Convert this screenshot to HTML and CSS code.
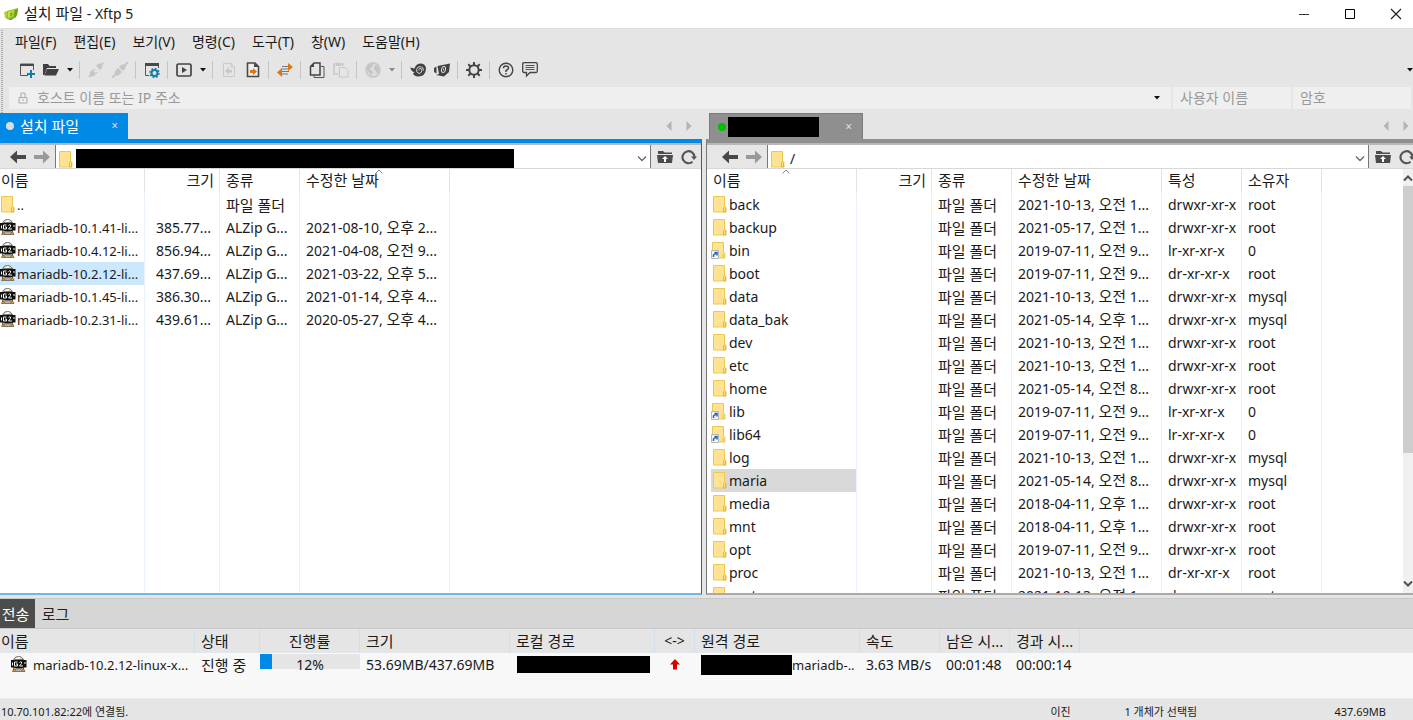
FILE: index.html
```html
<!DOCTYPE html>
<html lang="ko">
<head>
<meta charset="utf-8">
<title>설치 파일 - Xftp 5</title>
<link rel="stylesheet" href="styles.css">
</head>
<body>
<svg class="defs" aria-hidden="true">
  <symbol id="folder" viewBox="0 0 16 18">
    <path d="M1.500 1.500H12.500V11L14 12.500V17H1.500Z" fill="#ffe393" stroke="#ecc850"/>
    <path d="M11.500 17V12.500L12.500 11.500L13.500 12.500V17Z" fill="#fce07f" stroke="#e5b935"/>
  </symbol>
  <symbol id="shortcut" viewBox="0 0 16 18">
    <path d="M1.500 1.500H12.500V11L14 12.500V17H1.500Z" fill="#ffe393" stroke="#ecc850"/>
    <path d="M12 17V12.500" stroke="#e5b935"/>
    <path d="M.5 9.500H7.500V17.500H.5Z" fill="#f4f7fa" stroke="#b4b8bc"/>
    <path d="M2.500 16V14L5.500 12M3.500 11.500H6V14.500" fill="none" stroke="#2d63a8" stroke-width="1.500"/>
  </symbol>
  <symbol id="zip" viewBox="0 0 16 18">
    <path d="M2.500 6Q3 1.500 7.500 1.500Q12 1.500 12.500 6V15H2.500Z" fill="#d9d7c6" stroke="#777464"/>
    <path d="M5 5Q6 2.500 9 3" stroke="#fff" stroke-width="1.500" fill="none"/>
    <path d="M0 5H3L4 4.500H12L13 5H15.500V12.500H13L11 13.500H5L3 12.500H0Z" fill="#111"/>
    <path d="M6.500 7H3.500V11H6.500V9H5M8.500 7.500Q9 6.500 10.500 7Q11.500 8 8.500 11H12M1.500 7.500V10.500M14 7V9" fill="none" stroke="#f4f4ee"/>
    <path d="M1.500 16.500L3 13.500L5.500 16.500ZM10 16.500L12.500 13.500L14 16.500Z" fill="#e59a25" stroke="#59401a" stroke-width=".6"/>
    <path d="M5 16.500H10.500" stroke="#777"/>
  </symbol>
  <symbol id="back" viewBox="0 0 16 14"><path d="M0 7L7 0.500V5H16V9H7V13.500Z" fill="currentColor"/></symbol>
  <symbol id="forward" viewBox="0 0 16 14"><path d="M16 7L9 0.500V5H0V9H9V13.500Z" fill="currentColor"/></symbol>
  <symbol id="up" viewBox="0 0 16 14">
    <path d="M1 1H6L7.500 2.500H15V4H1ZM0 5H16L15 13H1Z" fill="#4b4b4b"/>
    <path d="M8 6L11 9H9V12H7V9H5Z" fill="#fff"/>
  </symbol>
  <symbol id="reload" viewBox="0 0 16 16">
    <path d="M11.500 12.700A6 6 0 1 1 13.500 8" fill="none" stroke="#555" stroke-width="2.200"/>
    <path d="M10 7.500H16L13 11Z" fill="#555"/>
  </symbol>
  <symbol id="chevron" viewBox="0 0 10 6"><path d="M1 .5L5 4.500L9 .5" fill="none" stroke="#666" stroke-width="1.300"/></symbol>
  <symbol id="sort" viewBox="0 0 8 5"><path d="M.5 4.500L4 1L7.500 4.500" fill="none" stroke="#888"/></symbol>
  <symbol id="drop" viewBox="0 0 6 4"><path d="M0 0H6L3 3.500Z" fill="currentColor"/></symbol>
  <symbol id="left" viewBox="0 0 6 10"><path d="M5.500 0V10L.5 5Z" fill="#b4b4b4"/></symbol>
  <symbol id="right" viewBox="0 0 6 10"><path d="M.5 0V10L5.500 5Z" fill="#b4b4b4"/></symbol>
</svg>

<header class="titlebar">
  <svg class="logo" viewBox="0 0 16 14">
    <path d="M0 5L4 4V12L1 11Z" fill="#b5cf3a"/>
    <path d="M3 4L14 1L13 8L9 11L3 12Z" fill="#8cc41c"/>
    <path d="M4 5L10 3L9 9L4 11Z" fill="#c9e04a"/>
    <path d="M6 6L9 5L8 9L6 9.500Z" fill="#7fae14"/>
    <path d="M11 3L14 2L13 8L10 10Z" fill="#6c9f12"/>
    <path d="M3 12L9 11L13 8L12 10L7 13Z" fill="#4b8610"/>
  </svg>
  <h1 class="caption"><span class="ko">설치 파일</span> - Xftp 5</h1>
  <div class="window-buttons">
    <button class="window-button" aria-label="최소화"><svg viewBox="0 0 12 12"><path d="M1 6.500H11" stroke="#333"/></svg></button>
    <button class="window-button" aria-label="최대화"><svg viewBox="0 0 12 12"><path d="M1.500 1.500H10.500V10.500H1.500Z" fill="none" stroke="#000"/></svg></button>
    <button class="window-button" aria-label="닫기"><svg viewBox="0 0 12 12"><path d="M1 1L11 11M11 1L1 11" stroke="#222" stroke-width="1.200"/></svg></button>
  </div>
</header>

<nav class="menubar">
  <button class="menu">파일(F)</button>
  <button class="menu">편집(E)</button>
  <button class="menu">보기(V)</button>
  <button class="menu">명령(C)</button>
  <button class="menu">도구(T)</button>
  <button class="menu">창(W)</button>
  <button class="menu">도움말(H)</button>
</nav>

<div class="toolbar">
  <button class="tool" aria-label="새로 만들기"><svg viewBox="0 0 16 16"><path d="M9 13.500H1.500V2H14.500V8" fill="none" stroke="#555"/><path d="M1 2H15V4H1Z" fill="#484848"/><path d="M12 8V16M8 12H16" stroke="#187aa8" stroke-width="2"/></svg></button>
  <button class="tool" aria-label="열기"><svg viewBox="0 0 16 16"><path d="M0 13V2H5L6.500 4H13V6H4L1.500 13Z" fill="#404040"/><path d="M4 7H16L13 13.500H1.500Z" fill="#404040"/></svg></button>
  <button class="more" aria-label="열기 목록"><svg viewBox="0 0 6 4"><use href="#drop"/></svg></button>
  <i class="sep"></i>
  <button class="tool" disabled aria-label="다시 연결"><svg viewBox="0 0 16 16"><path d="M1 15L3 13M15 1L13 3" stroke="#c6c6c6" stroke-width="2"/><path d="M2 10L4 8L8 12L6 14Q4 15 2.500 13.500Q1 12 2 10ZM8 4L10 2Q12 1 13.500 2.500Q15 4 14 6L12 8Z" fill="#c6c6c6"/><path d="M5 9L7 7M7.500 11.500L9 10" stroke="#c6c6c6" stroke-width="1.500"/></svg></button>
  <button class="tool" disabled aria-label="연결 끊기"><svg viewBox="0 0 16 16"><path d="M0 16L4 12M12 4L16 0" stroke="#c6c6c6" stroke-width="2"/><path d="M3 9L6 6L10 10L7 13Q5 14 3 13Q2 11 3 9ZM7 5L9 3Q11 2 13 3Q14 5 13 7L11 9Z" fill="#c6c6c6"/></svg></button>
  <i class="sep"></i>
  <button class="tool" aria-label="속성"><svg viewBox="0 0 16 16"><path d="M5 13.500H1.500V2H14.500V6" fill="none" stroke="#555"/><path d="M1 1H15V4H1Z" fill="#484848"/><circle cx="10.500" cy="11" r="3" fill="none" stroke="#187aa8" stroke-width="2"/><circle cx="10.500" cy="11" r="4.500" fill="none" stroke="#187aa8" stroke-width="1.500" stroke-dasharray="1.700 1.800"/></svg></button>
  <i class="sep"></i>
  <button class="tool" aria-label="실행"><svg viewBox="0 0 16 16"><rect x="1" y="2" width="14" height="12" rx="1.500" fill="none" stroke="#444" stroke-width="1.700"/><path d="M6 5L11 8L6 11Z" fill="#444"/></svg></button>
  <button class="more" aria-label="실행 목록"><svg viewBox="0 0 6 4"><use href="#drop"/></svg></button>
  <i class="sep"></i>
  <button class="tool" disabled aria-label="받기"><svg viewBox="0 0 16 16"><path d="M2.500 1.500H10L13.500 5V14.500H2.500Z" fill="none" stroke="#c9c9c9"/><path d="M10 1V5H14" fill="none" stroke="#c9c9c9"/><path d="M4 9L8 5.500V8H11V10.500H8V12.500Z" fill="#c6c6c6"/></svg></button>
  <button class="tool" aria-label="보내기"><svg viewBox="0 0 16 16"><path d="M2.500 1H10L13.500 4.500V14.500H2.500Z" fill="#eee" stroke="#484848" stroke-width="1.600"/><path d="M9 1V5H14Z" fill="#484848"/><path d="M12 9.500L8 6V8H5V11H8V13Z" fill="#e07612"/></svg></button>
  <i class="sep"></i>
  <button class="tool" aria-label="동기화"><svg viewBox="0 0 16 16"><path d="M5 4.500H11M4 7H12M4 9.500H12M5 12H11" stroke="#777"/><path d="M11 1L16 5L11 9ZM5 6L0 10.500L5 15Z" fill="#e07612"/></svg></button>
  <i class="sep"></i>
  <button class="tool" aria-label="복사"><svg viewBox="0 0 16 16"><path d="M5 1H11V13H1.500V4.500Z" fill="none" stroke="#444" stroke-width="1.500"/><path d="M1 5L5 1V5Z" fill="#444"/><path d="M12 4.500H15V15.500H5V13" fill="none" stroke="#555"/></svg></button>
  <button class="tool" disabled aria-label="붙여넣기"><svg viewBox="0 0 16 16"><path d="M5 12H1V2H10V4" fill="none" stroke="#c9c9c9" stroke-width="1.600"/><path d="M3 1H8V4H3Z" fill="#c9c9c9"/><path d="M6.500 5.500H12L15 8.500V15H6.500Z" fill="#e6e6e6" stroke="#c6c6c6"/></svg></button>
  <i class="sep"></i>
  <button class="tool" disabled aria-label="인코딩"><svg viewBox="0 0 16 16"><circle cx="8" cy="8" r="7" fill="#ddd" stroke="#c4c4c4" stroke-width="1.300"/><path d="M2 4Q5 1 8 2L7 5L4.500 6L6 8L8 10L6 14L4 10L1.500 8ZM10 3L13 4L14.500 8L12 12L11 9L9 7Z" fill="#c4c4c4"/></svg></button>
  <button class="more" disabled aria-label="인코딩 목록"><svg viewBox="0 0 6 4"><use href="#drop"/></svg></button>
  <i class="sep"></i>
  <button class="tool" aria-label="Xshell"><svg viewBox="0 0 16 16"><path d="M0 5.500L4.500 6.500Q6 1.500 11 1.500Q16 2 16 7Q15.500 14.500 8 14.500Q4 14 3 11.500L4.500 10.500Q1 9 0 5.500Z" fill="#424242"/><path d="M13.500 8.500A3.500 3.500 0 1 0 9 11.500Q12 11 12 8Q11.500 6 9.700 6.500Q8.500 7 9 8.500" fill="none" stroke="#d4d4d4"/></svg></button>
  <button class="tool" aria-label="Xftp"><svg viewBox="0 0 16 16"><path d="M0 6L2.500 4.500V11.500L0 10ZM3.500 4L16 1.500L15 10L10 14.500L2 13L5 12Z" fill="#424242"/><ellipse cx="9.500" cy="7.500" rx="2" ry="3" fill="none" stroke="#ddd" transform="rotate(12 9.500 7.500)"/><path d="M9.500 6.500V8.500" stroke="#ddd"/></svg></button>
  <i class="sep"></i>
  <button class="tool" aria-label="옵션"><svg viewBox="0 0 16 16"><circle cx="8" cy="8" r="4.700" fill="none" stroke="#444" stroke-width="2"/><path d="M8 0V3M8 13V16M0 8H3M13 8H16M2.300 2.300L4.500 4.500M11.500 11.500L13.700 13.700M13.700 2.300L11.500 4.500M2.300 13.700L4.500 11.500" stroke="#444" stroke-width="2"/></svg></button>
  <i class="sep"></i>
  <button class="tool" aria-label="도움말"><svg viewBox="0 0 16 16"><circle cx="8" cy="8" r="6.800" fill="none" stroke="#444" stroke-width="1.400"/><path d="M5.500 6.200Q5.500 4 8 4Q10.500 4 10.500 6Q10.500 7.500 8 8.500V10M8 11V12.500" fill="none" stroke="#444" stroke-width="1.500"/></svg></button>
  <button class="tool" aria-label="의견"><svg viewBox="0 0 16 16"><path d="M2 .7H14Q15.300 .7 15.300 2V9Q15.300 10.500 14 10.500H8L4.500 14V10.500H2Q.7 10.500 .7 9V2Q.7 .7 2 .7Z" fill="none" stroke="#444" stroke-width="1.300"/><path d="M3.500 3.500H12.500M3.500 5.500H12.500M3.500 7.500H12.500" stroke="#555"/></svg></button>
  <button class="more overflow" aria-label="더 보기"><svg viewBox="0 0 6 4"><use href="#drop"/></svg></button>
</div>

<div class="connect">
  <label class="field host">
    <svg class="lock" viewBox="0 0 10 12"><path d="M1 5.500H9V11H1ZM3 5V1H7V5M5 7V9" fill="none" stroke="#aaa"/></svg>
    <input type="text" aria-label="호스트" placeholder="호스트 이름 또는 IP 주소">
    <button class="more" aria-label="호스트 목록"><svg viewBox="0 0 6 4"><use href="#drop"/></svg></button>
  </label>
  <input class="field login" type="text" aria-label="사용자 이름" placeholder="사용자 이름">
  <input class="field login" type="password" aria-label="암호" placeholder="암호">
</div>

<main class="panes">
  <section class="pane local">
    <div class="tabs">
      <button class="tab"><i class="dot"></i><span class="ko">설치 파일</span><span class="close">×</span></button>
      <div class="scrollers"><svg viewBox="0 0 6 10"><use href="#left"/></svg><svg viewBox="0 0 6 10"><use href="#right"/></svg></div>
    </div>
    <div class="frame">
      <div class="pathbar">
        <button class="nav" aria-label="뒤로"><svg viewBox="0 0 16 14"><use href="#back"/></svg></button>
        <button class="nav" disabled aria-label="앞으로"><svg viewBox="0 0 16 14"><use href="#forward"/></svg></button>
        <div class="path"><svg class="file-icon"><use href="#folder"/></svg><i class="mask mask-path"></i><svg class="chevron"><use href="#chevron"/></svg></div>
        <button class="nav" aria-label="상위 폴더"><svg viewBox="0 0 16 14"><use href="#up"/></svg></button>
        <button class="nav" aria-label="새로 고침"><svg viewBox="0 0 16 16"><use href="#reload"/></svg></button>
      </div>
      <div class="list">
        <table class="files">
          <colgroup><col class="w-name"><col class="w-size"><col class="w-kind"><col class="w-date"><col></colgroup>
          <thead><tr><th>이름</th><th class="num">크기</th><th>종류</th><th class="sorted">수정한 날짜<svg class="sort"><use href="#sort"/></svg></th><th></th></tr></thead>
          <tbody>
            <tr><td class="name"><svg class="file-icon"><use href="#folder"/></svg>..</td><td></td><td class="ko">파일 폴더</td><td></td><td></td></tr>
            <tr><td class="name"><svg class="file-icon"><use href="#zip"/></svg>mariadb-10.1.41-li...</td><td class="num">385.77...</td><td>ALZip G...</td><td>2021-08-10, <span class="ko">오후</span> 2...</td><td></td></tr>
            <tr><td class="name"><svg class="file-icon"><use href="#zip"/></svg>mariadb-10.4.12-li...</td><td class="num">856.94...</td><td>ALZip G...</td><td>2021-04-08, <span class="ko">오전</span> 9...</td><td></td></tr>
            <tr class="selected"><td class="name"><svg class="file-icon"><use href="#zip"/></svg>mariadb-10.2.12-li...</td><td class="num">437.69...</td><td>ALZip G...</td><td>2021-03-22, <span class="ko">오후</span> 5...</td><td></td></tr>
            <tr><td class="name"><svg class="file-icon"><use href="#zip"/></svg>mariadb-10.1.45-li...</td><td class="num">386.30...</td><td>ALZip G...</td><td>2021-01-14, <span class="ko">오후</span> 4...</td><td></td></tr>
            <tr><td class="name"><svg class="file-icon"><use href="#zip"/></svg>mariadb-10.2.31-li...</td><td class="num">439.61...</td><td>ALZip G...</td><td>2020-05-27, <span class="ko">오후</span> 4...</td><td></td></tr>
            <tr class="rest"><td></td><td></td><td></td><td></td><td></td></tr>
          </tbody>
        </table>
      </div>
    </div>
  </section>

  <section class="pane remote">
    <div class="tabs">
      <button class="tab" aria-label="원격"><i class="dot"></i><i class="mask mask-tab"></i><span class="close">×</span></button>
      <div class="scrollers"><svg viewBox="0 0 6 10"><use href="#left"/></svg><svg viewBox="0 0 6 10"><use href="#right"/></svg></div>
    </div>
    <div class="frame">
      <div class="pathbar">
        <button class="nav" aria-label="뒤로"><svg viewBox="0 0 16 14"><use href="#back"/></svg></button>
        <button class="nav" disabled aria-label="앞으로"><svg viewBox="0 0 16 14"><use href="#forward"/></svg></button>
        <div class="path"><svg class="file-icon"><use href="#folder"/></svg><span class="path-text">/</span><svg class="chevron"><use href="#chevron"/></svg></div>
        <button class="nav" aria-label="상위 폴더"><svg viewBox="0 0 16 14"><use href="#up"/></svg></button>
        <button class="nav" aria-label="새로 고침"><svg viewBox="0 0 16 16"><use href="#reload"/></svg></button>
      </div>
      <div class="list">
        <table class="files">
          <colgroup><col class="w-name"><col class="w-size"><col class="w-kind"><col class="w-date"><col class="w-kind"><col class="w-kind"><col></colgroup>
          <thead><tr><th class="sorted">이름<svg class="sort"><use href="#sort"/></svg></th><th class="num">크기</th><th>종류</th><th>수정한 날짜</th><th>특성</th><th>소유자</th><th></th></tr></thead>
          <tbody>
            <tr><td class="name"><svg class="file-icon"><use href="#folder"/></svg>back</td><td></td><td class="ko">파일 폴더</td><td>2021-10-13, <span class="ko">오전</span> 1...</td><td>drwxr-xr-x</td><td>root</td><td></td></tr>
            <tr><td class="name"><svg class="file-icon"><use href="#folder"/></svg>backup</td><td></td><td class="ko">파일 폴더</td><td>2021-05-17, <span class="ko">오전</span> 1...</td><td>drwxr-xr-x</td><td>root</td><td></td></tr>
            <tr><td class="name link"><svg class="file-icon"><use href="#shortcut"/></svg>bin</td><td></td><td class="ko">파일 폴더</td><td>2019-07-11, <span class="ko">오전</span> 9...</td><td>lr-xr-xr-x</td><td>0</td><td></td></tr>
            <tr><td class="name"><svg class="file-icon"><use href="#folder"/></svg>boot</td><td></td><td class="ko">파일 폴더</td><td>2019-07-11, <span class="ko">오전</span> 9...</td><td>dr-xr-xr-x</td><td>root</td><td></td></tr>
            <tr><td class="name"><svg class="file-icon"><use href="#folder"/></svg>data</td><td></td><td class="ko">파일 폴더</td><td>2021-10-13, <span class="ko">오전</span> 1...</td><td>drwxr-xr-x</td><td>mysql</td><td></td></tr>
            <tr><td class="name"><svg class="file-icon"><use href="#folder"/></svg>data_bak</td><td></td><td class="ko">파일 폴더</td><td>2021-05-14, <span class="ko">오후</span> 1...</td><td>drwxr-xr-x</td><td>mysql</td><td></td></tr>
            <tr><td class="name"><svg class="file-icon"><use href="#folder"/></svg>dev</td><td></td><td class="ko">파일 폴더</td><td>2021-10-13, <span class="ko">오전</span> 1...</td><td>drwxr-xr-x</td><td>root</td><td></td></tr>
            <tr><td class="name"><svg class="file-icon"><use href="#folder"/></svg>etc</td><td></td><td class="ko">파일 폴더</td><td>2021-10-13, <span class="ko">오전</span> 1...</td><td>drwxr-xr-x</td><td>root</td><td></td></tr>
            <tr><td class="name"><svg class="file-icon"><use href="#folder"/></svg>home</td><td></td><td class="ko">파일 폴더</td><td>2021-05-14, <span class="ko">오전</span> 8...</td><td>drwxr-xr-x</td><td>root</td><td></td></tr>
            <tr><td class="name link"><svg class="file-icon"><use href="#shortcut"/></svg>lib</td><td></td><td class="ko">파일 폴더</td><td>2019-07-11, <span class="ko">오전</span> 9...</td><td>lr-xr-xr-x</td><td>0</td><td></td></tr>
            <tr><td class="name link"><svg class="file-icon"><use href="#shortcut"/></svg>lib64</td><td></td><td class="ko">파일 폴더</td><td>2019-07-11, <span class="ko">오전</span> 9...</td><td>lr-xr-xr-x</td><td>0</td><td></td></tr>
            <tr><td class="name"><svg class="file-icon"><use href="#folder"/></svg>log</td><td></td><td class="ko">파일 폴더</td><td>2021-10-13, <span class="ko">오전</span> 1...</td><td>drwxr-xr-x</td><td>mysql</td><td></td></tr>
            <tr class="selected"><td class="name"><svg class="file-icon"><use href="#folder"/></svg>maria</td><td></td><td class="ko">파일 폴더</td><td>2021-05-14, <span class="ko">오전</span> 8...</td><td>drwxr-xr-x</td><td>mysql</td><td></td></tr>
            <tr><td class="name"><svg class="file-icon"><use href="#folder"/></svg>media</td><td></td><td class="ko">파일 폴더</td><td>2018-04-11, <span class="ko">오후</span> 1...</td><td>drwxr-xr-x</td><td>root</td><td></td></tr>
            <tr><td class="name"><svg class="file-icon"><use href="#folder"/></svg>mnt</td><td></td><td class="ko">파일 폴더</td><td>2018-04-11, <span class="ko">오후</span> 1...</td><td>drwxr-xr-x</td><td>root</td><td></td></tr>
            <tr><td class="name"><svg class="file-icon"><use href="#folder"/></svg>opt</td><td></td><td class="ko">파일 폴더</td><td>2019-07-11, <span class="ko">오전</span> 9...</td><td>drwxr-xr-x</td><td>root</td><td></td></tr>
            <tr><td class="name"><svg class="file-icon"><use href="#folder"/></svg>proc</td><td></td><td class="ko">파일 폴더</td><td>2021-10-13, <span class="ko">오전</span> 1...</td><td>dr-xr-xr-x</td><td>root</td><td></td></tr>
            <tr><td class="name"><svg class="file-icon"><use href="#folder"/></svg>root</td><td></td><td class="ko">파일 폴더</td><td>2021-10-13, <span class="ko">오전</span> 1...</td><td>dr-xr-x---</td><td>root</td><td></td></tr>
          </tbody>
        </table>
        <div class="scrollbar">
          <svg viewBox="0 0 10 6"><path d="M1 5.500L5 1.500L9 5.500" fill="none" stroke="#505050" stroke-width="2"/></svg>
          <i class="thumb"></i>
          <svg viewBox="0 0 10 6"><path d="M1 .5L5 4.500L9 .5" fill="none" stroke="#505050" stroke-width="2"/></svg>
        </div>
      </div>
    </div>
  </section>
</main>

<section class="transfers">
  <div class="bottom-tabs">
    <button class="bottom-tab active">전송</button>
    <button class="bottom-tab">로그</button>
  </div>
  <table class="jobs">
    <colgroup><col class="j-name"><col class="j-state"><col class="j-progress"><col class="w-date"><col class="j-local"><col class="j-dir"><col class="j-remote"><col class="w-kind"><col class="j-time"><col class="j-time"><col></colgroup>
    <thead><tr><th>이름</th><th>상태</th><th class="mid">진행률</th><th>크기</th><th>로컬 경로</th><th class="mid latin">&lt;-&gt;</th><th>원격 경로</th><th>속도</th><th>남은 시...</th><th>경과 시...</th><th></th></tr></thead>
    <tbody><tr>
      <td class="name"><svg class="file-icon"><use href="#zip"/></svg>mariadb-10.2.12-linux-x...</td>
      <td class="ko">진행 중</td>
      <td class="bar-cell"><div class="bar"><i class="fill" style="width:12%"></i><span class="percent">12%</span></div></td>
      <td>53.69MB/437.69MB</td>
      <td><i class="mask mask-local"></i></td>
      <td class="mid"><svg class="upload" viewBox="0 0 10 11"><path d="M5 0L10 5.500H7V10.500H3V5.500H0Z" fill="#d40000"/></svg></td>
      <td><span class="remote-path"><i class="mask mask-remote"></i>mariadb-..</span></td>
      <td>3.63 MB/s</td>
      <td>00:01:48</td>
      <td>00:00:14</td>
      <td></td>
    </tr></tbody>
  </table>
</section>

<footer class="statusbar">
  <span class="status-main">10.70.101.82:22에 연결됨.</span>
  <span class="status-mode">이진</span>
  <span class="status-count">1 개체가 선택됨</span>
  <span class="status-size">437.69MB</span>
</footer>
</body>
</html>
```

FILE: styles.css
```css
* { box-sizing: border-box; }

body {
  margin: 0;
  height: 100vh;
  display: flex;
  flex-direction: column;
  overflow: hidden;
  background: #e5e5e5;
  color: #1a1a1a;
  font: 14px/22px "Noto Sans", "Noto Sans CJK KR", sans-serif;
}

button, input { font: inherit; color: inherit; border: 0; padding: 0; background: none; }
svg { display: block; flex: none; }
.defs { position: absolute; width: 0; height: 0; }
.ko { font-size: 15px; line-height: 20px; }

/* title bar */
.titlebar { display: flex; align-items: center; height: 28px; padding-left: 4px; background: #fff; flex: none; }
.logo { width: 16px; height: 14px; }
.caption { margin: 0 0 0 4px; font-size: 14px; font-weight: 400; flex: 1; }
.window-buttons { display: flex; margin-right: -6px; }
.window-button { width: 46px; height: 26px; display: grid; place-items: center; }
.window-button svg { width: 12px; height: 12px; }

/* bars with a dotted grip at the left */
.menubar, .toolbar, .connect {
  display: flex;
  align-items: center;
  flex: none;
  background: linear-gradient(#aaa 50%, transparent 50%) 1px 3px / 2px 2px repeat-y;
}
.menubar { height: 27px; padding-left: 15px; gap: 17px; border-top: 1px solid #ddd; }
.toolbar { height: 30px; padding-left: 15px; }
.tool { width: 24px; height: 24px; display: grid; place-items: center; }
.tool svg { width: 16px; height: 16px; }
.more { width: 13px; height: 24px; display: grid; place-items: center; color: #111; }
.more:disabled { color: #888; }
.more svg { width: 6px; height: 4px; }
.overflow { margin-left: auto; width: 6px; }
.sep { width: 1px; height: 18px; margin: 0 4px 0 3px; background: #c4c4c4; }

.connect { height: 28px; padding: 2px 2px 4px 9px; gap: 2px; }
.field { height: 22px; background: #efefef; }
.host { flex: 1; display: flex; align-items: center; padding: 0 8px 0 9px; gap: 9px; }
.host input { flex: 1; min-width: 0; }
.lock { width: 10px; height: 12px; }
.login { width: 118px; padding-left: 7px; }
input::placeholder { color: #999; opacity: 1; }

/* file panes */
.panes { flex: 1; min-height: 0; display: grid; grid-template-columns: 702fr 707fr; gap: 4px; }
.pane { display: flex; flex-direction: column; min-width: 0; min-height: 0; }
.local { --accent: #008ae6; --edge: #0070c0; --base: #6fb9ea; }
.remote { --accent: #8f8f8f; --edge: #777; --base: #aaa; }
.tabs { display: flex; align-items: center; height: 26px; flex: none; }
.tab { display: flex; align-items: center; width: 128px; height: 26px; padding-left: 6px; background: var(--accent); color: #fff; }
.remote .tab { width: 154px; margin-left: 3px; padding-left: 8px; border: 1px solid #7c7c7c; border-bottom: 0; }
.dot { width: 8px; height: 8px; border-radius: 50%; background: #ddd; margin-right: 6px; }
.remote .dot { background: #00c000; margin-right: 2px; }
.close { margin-left: auto; margin-right: 10px; font-size: 12px; color: #ddd; }
.scrollers { margin-left: auto; display: flex; gap: 14px; padding-right: 10px; }
.remote .scrollers { padding-right: 4px; }
.scrollers svg { width: 6px; height: 10px; }
.frame {
  flex: 1;
  min-height: 0;
  display: flex;
  flex-direction: column;
  border: solid var(--edge);
  border-width: 4px 0 2px 1px;
  border-top-color: var(--accent);
  border-bottom-color: var(--base);
  background: #fff;
}
.local .frame { border-left: 0; border-right: 1px solid var(--edge); }
.pathbar { display: flex; align-items: center; height: 26px; flex: none; border-top: 2px solid #b8b8b8; border-bottom: 1px solid #d8d8d8; background: #e6e6e6; padding-left: 6px; }
.remote .pathbar { padding-left: 11px; margin-right: -6px; }
.nav { width: 24px; height: 22px; display: grid; place-items: center; color: #484848; }
.nav:disabled { color: #999; }
.nav svg { width: 16px; height: 16px; }
.path { flex: 1; display: flex; align-items: center; height: 23px; margin-left: 1px; margin-right: 2px; padding: 4px 3px 0 2px; border: solid #777; border-width: 0 1px; background: #fff; }
.path .file-icon { margin: 0; }
.path-text { margin-left: 4px; }
.chevron { width: 10px; height: 6px; margin-left: auto; }
.mask { display: block; flex: none; background: #000; }
.mask-path { width: 438px; height: 19px; margin-left: 2px; }
.mask-tab { width: 91px; height: 20px; }

.list { flex: 1; min-height: 0; display: flex; overflow: hidden; }
table { border-collapse: separate; border-spacing: 0; table-layout: fixed; width: 100%; }
th, td { padding: 0 0 0 6px; font-weight: 400; text-align: left; white-space: nowrap; overflow: hidden; }
th { font-size: 15px; }
.num { text-align: right; padding-right: 8px; }
.mid { text-align: center; padding: 0; }
.latin { font-size: 14px; }
.files { height: 100%; }
.files th { height: 24px; padding-bottom: 2px; line-height: 22px; border-right: 1px solid #e0e4e8; }
.files th.num { padding-right: 5px; }
.files td { height: 23px; line-height: 22px; border-right: 1px solid #e9f2fb; }
.files th:last-child, .files td:last-child { border-right: 0; }
.files thead th:first-child { padding-left: 1px; }
.remote .files thead th:first-child { padding-left: 6px; }
.rest td { height: auto; }
.sorted { position: relative; }
.sort { position: absolute; top: 0; left: 50%; width: 8px; height: 5px; }
.file-icon { display: inline-block; width: 16px; height: 18px; vertical-align: top; margin: 1px 1px 0 0; }
.files .name { padding-left: 0; }
.local .name, .jobs .name, .remote-path { font-size: 13px; }
.remote .files .name { padding-left: 5px; }
.remote .files .link { padding-left: 4px; }
.link .file-icon { margin-right: 2px; }
.local .selected .name { background: #cce8ff; }
.remote .selected .name { background: linear-gradient(#d9d9d9, #d9d9d9) 4px 0 no-repeat; }
.w-name { width: 145px; }
.remote .w-name { width: 150px; }
.w-size { width: 75px; }
.w-kind { width: 80px; }
.w-date { width: 150px; }

.scrollbar { width: 10px; flex: none; display: flex; flex-direction: column; align-items: center; justify-content: space-between; background: #f0f0f0; padding: 6px 0; overflow: hidden; }
.scrollbar svg { width: 10px; height: 6px; }
.thumb { width: 100%; height: 267px; margin: 5px 0 auto; background: #cdcdcd; }

/* transfer list */
.transfers { flex: none; height: 101px; margin-top: 3px; background: #f8f8f8; border-bottom: 1px solid #ececec; }
.bottom-tabs { display: flex; height: 31px; background: #d6d6d6; border: solid #c8c8c8; border-width: 1px 0; }
.bottom-tab { width: 35px; padding-right: 4px; font-size: 15px; color: #222; }
.bottom-tab + .bottom-tab { width: 45px; }
.bottom-tab.active { background: #4c4c4c; color: #fff; }
.jobs th { height: 24px; padding-left: 6px; background: #e5e5e5; border-right: 1px solid #d3dfec; border-bottom: 1px solid #e2e8ee; }
.jobs th:first-child { padding-left: 1px; }
.jobs th:last-child { border-right: 0; }
.jobs th.mid { padding: 0; }
.jobs td { height: 23px; }
.jobs .name { padding-left: 11px; }
.jobs .file-icon { margin-right: 6px; }
.jobs .bar-cell { padding: 0; vertical-align: top; }
.jobs .mid { padding: 0; }
.j-name { width: 195px; }
.j-state { width: 65px; }
.j-progress { width: 100px; }
.j-local { width: 145px; }
.j-dir { width: 40px; }
.j-remote { width: 165px; }
.j-time { width: 70px; }
.bar { position: relative; height: 15px; margin-top: 1px; background: #e5e5e5; text-align: center; }
.fill { position: absolute; left: 0; top: 0; height: 100%; background: #008ae6; }
.percent { position: relative; }
.mask-local { width: 133px; height: 17px; margin-left: 1px; }
.mask-remote { width: 91px; height: 20px; }
.remote-path { display: flex; align-items: center; }
.upload { width: 10px; height: 11px; margin: 0 auto; }

.statusbar { flex: none; display: flex; align-items: center; height: 21px; padding: 4px 27px 0 1px; font-size: 11px; line-height: 16px; }
.status-main { flex: 1; }
.status-mode { width: 74px; }
.status-count { width: 210px; }
```
